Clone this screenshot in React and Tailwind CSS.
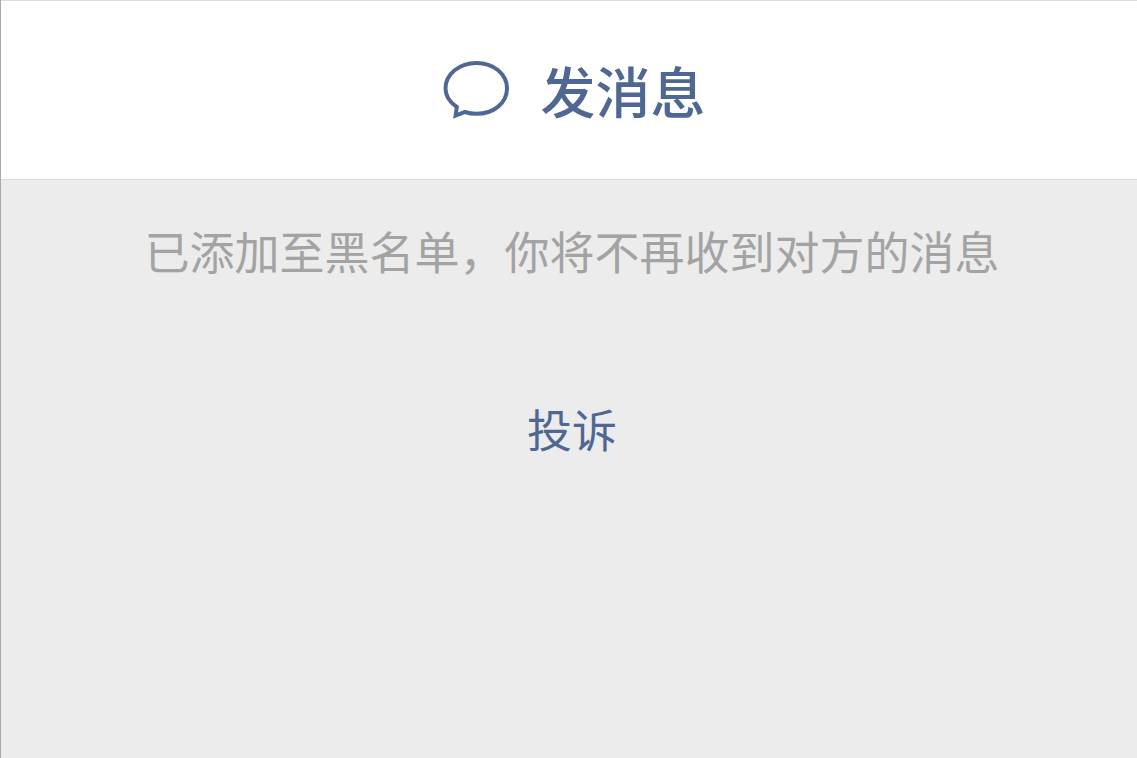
function ChatBubbleIcon() {
  return (
    <svg
      className="h-[60px] w-[68px] shrink-0"
      viewBox="0 0 68 60"
      fill="none"
      stroke="currentColor"
      strokeWidth="4"
      strokeLinejoin="miter"
      aria-hidden="true"
    >
      <path d="M14.8 48 C7.5 43 3.5 36.5 3.5 29.5 C3.5 15 17.5 4 34.5 4 C51.5 4 65 15 65 29.5 C65 44 51.5 54.8 34.5 54.8 C30.5 54.8 26.8 54.3 23 53 L13.6 56.6 Z" />
    </svg>
  );
}

export default function App() {
  return (
    <div
      lang="zh-CN"
      className="flex min-h-screen flex-col border-l border-[#a9a9a9] bg-[#ececec] font-['Noto_Sans_CJK_SC',sans-serif]"
    >
      {/* Send message */}
      <button
        type="button"
        className="flex h-[180px] w-full items-center justify-center gap-[30px] border-y border-[#dcdcdc] bg-white pb-0.5 pl-2.5 text-[55px] leading-[64px] font-medium text-[#4f6793]"
      >
        <ChatBubbleIcon />
        <span>发消息</span>
      </button>

      {/* Blocked notice and report link */}
      <main className="flex flex-col items-center gap-[114px] pt-[39px] pl-1.5 text-center text-[45px] leading-[64px]">
        <p className="text-[#a3a3a3]">已添加至黑名单，你将不再收到对方的消息</p>
        <a href="#report" className="text-[#4f6793]">投诉</a>
      </main>
    </div>
  );
}
